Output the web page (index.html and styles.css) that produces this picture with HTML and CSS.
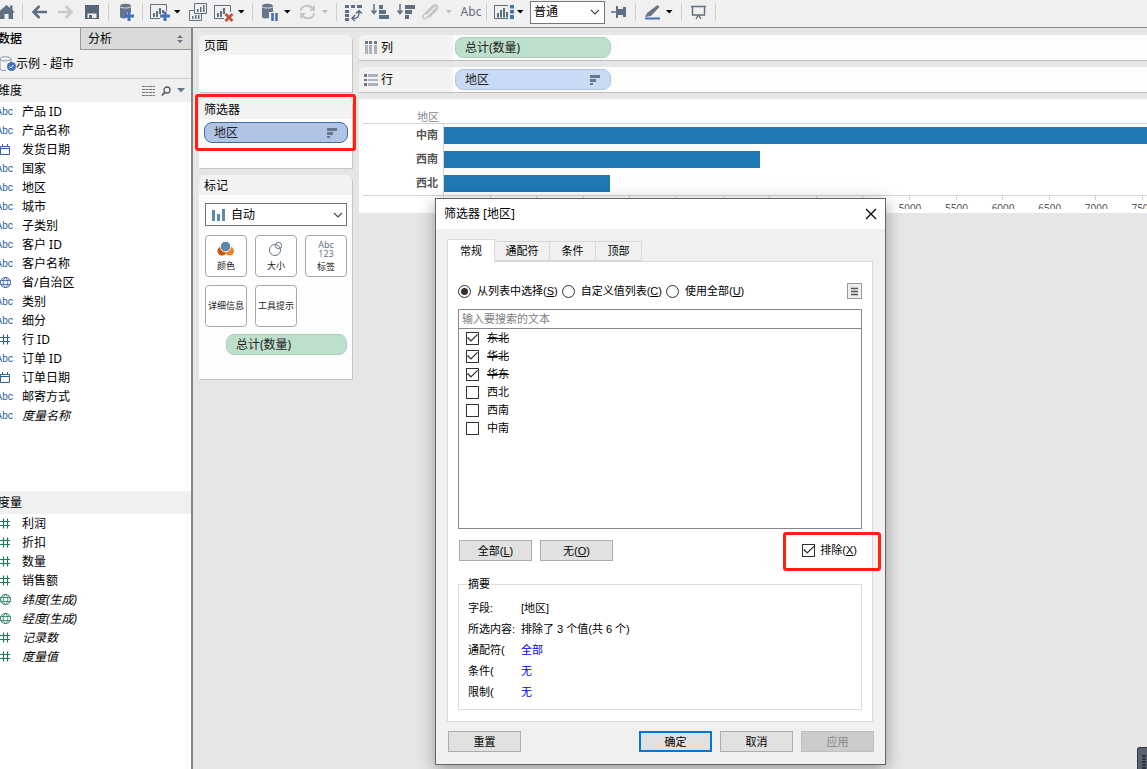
FILE: index.html
```html
<!DOCTYPE html>
<html lang="zh-CN">
<head>
<meta charset="utf-8">
<title>示例 - 超市</title>
<link rel="stylesheet" href="styles.css">
</head>
<body>
<svg class="defs" aria-hidden="true">
  <symbol id="i-date" viewBox="0 0 15 13"><path d="M2.5 3.5h9v8h-9zM2 5.5h10M4.5 1v3M9.5 1v3" fill="none" stroke="currentColor"/></symbol>
  <symbol id="i-num" viewBox="0 0 15 13"><path d="M5.5 1.500v10M9.500 1.500v10M2 4.500h10M2 8.500h10" fill="none" stroke="currentColor" stroke-width="1.200"/></symbol>
  <symbol id="i-geo" viewBox="0 0 15 13"><circle cx="7.500" cy="6.500" r="5" fill="none" stroke="currentColor"/><path d="M2.500 4.500h10M2.500 8.500h10M7.500 1.500C4.500 4 4.500 9 7.500 11.500C10.500 9 10.500 4 7.500 1.500" fill="none" stroke="currentColor" stroke-width=".8"/></symbol>
  <symbol id="i-sort" viewBox="0 0 12 12"><path d="M1 1h10v3H1zM1 5h6v3H1zM1 9h3v2H1z" fill="currentColor"/></symbol>
  <symbol id="i-chev" viewBox="0 0 10 8"><path d="M1 2l4 4 4-4" fill="none" stroke="#444" stroke-width="1.100"/></symbol>
</svg>

<header class="toolbar">
  <button aria-label="主页"><svg width="22" height="24" viewBox="0 0 22 24"><path d="M-2 12.500L6.500 5l3.500 3V5.500h2.500V10l2.500 2.500h-2V19H8.500v-5h-4v5H0v-6.500z" fill="#5f6f82"/></svg></button>
  <span class="sep"></span>
  <button aria-label="后退"><svg width="30" height="24" viewBox="23 0 30 24"><path d="M39.500 6l-6 6 6 6M34 12h13" fill="none" stroke="#5f6f82" stroke-width="2.600"/></svg></button>
  <button aria-label="前进" disabled><svg width="26" height="24" viewBox="53 0 26 24"><path d="M65.500 6l6 6-6 6M71 12H58" fill="none" stroke="#c9c9c9" stroke-width="2.600"/></svg></button>
  <button aria-label="保存"><svg width="29" height="24" viewBox="79 0 29 24"><path d="M85 5h14v14H85z" fill="#566579"/><path d="M87.500 13.500h9V18h-9z" fill="#f0f0f0"/><path d="M89 15h3v3h-3z" fill="#566579"/></svg></button>
  <span class="sep"></span>
  <button aria-label="新建数据源"><svg width="33" height="24" viewBox="109 0 33 24"><path d="M120 6c0-3 11-3 11 0v6h-4v6c-4 1-7 0-7-1z" fill="#66758a"/><path d="M120 6.500c0 2 11 2 11 0" stroke="#dfe3e8" fill="none"/><path d="M129 11v10M124 16h10" stroke="#4472b8" stroke-width="3"/></svg></button>
  <span class="sep"></span>
  <button aria-label="新建工作表"><svg width="40" height="24" viewBox="143 0 40 24"><path d="M160 18.500h-9.500v-14h16V11" fill="none" stroke="#5f6f82"/><path d="M153 13h2v4h-2zM156 11h2v6h-2zM159 8h2v6h-2zM162 10h2v3h-2z" fill="#5f6f82"/><path d="M165 11.500v9.500M160 16h10" stroke="#4472b8" stroke-width="3"/><path d="M174 10h6.500l-3.200 3.500z"/></svg></button>
  <button aria-label="复制工作表"><svg width="27" height="24" viewBox="183 0 27 24"><path d="M194.500 10V3.500h12v10h-12v-3h-5v10h12v-7" fill="none" stroke="#5f6f82"/><path d="M192 16h1.500v3H192zM195 15h1.500v4H195zM198 15h1.500v4H198zM197 9h1.500v3H197zM200 7h1.500v5H200zM203 5h1.500v7H203z" fill="#5f6f82"/></svg></button>
  <button aria-label="清除工作表"><svg width="42" height="24" viewBox="210 0 42 24"><path d="M224 18.500h-9.500v-13h16V12" fill="none" stroke="#5f6f82"/><path d="M217 13h2v4h-2zM220 11h2v6h-2zM223 8h2v6h-2z" fill="#5f6f82"/><path d="M225.500 14l7 7M232.500 14l-7 7" stroke="#c2513a" stroke-width="2.600"/><path d="M238 10h6.500l-3.200 3.500z"/></svg></button>
  <span class="sep"></span>
  <button aria-label="暂停更新"><svg width="41" height="24" viewBox="253 0 41 24"><path d="M262 6c0-3 11-3 11 0v6h-4v6c-4 1-7 0-7-1z" fill="#66758a"/><path d="M262 6.500c0 2 11 2 11 0" stroke="#dfe3e8" fill="none"/><path d="M272.500 13v8M276.500 13v8" stroke="#4472b8" stroke-width="2.600"/><path d="M284 10h6.500l-3.200 3.500z"/></svg></button>
  <button aria-label="刷新" disabled><svg width="42" height="24" viewBox="294 0 42 24"><path d="M301 11c0-6 9-7 12-2M314 13c0 6-9 7-12 2" fill="none" stroke="#c4c4c4" stroke-width="2"/><path d="M315 5v6h-6zM300 19v-6h6z" fill="#c4c4c4"/><path d="M322 10h6l-3 3.500z" fill="#bbb"/></svg></button>
  <span class="sep"></span>
  <button aria-label="交换行和列"><svg width="30" height="24" viewBox="337 0 30 24"><path d="M345 5h4v3h-4zM351 5h4v3h-4zM357 5h5v3h-5zM345 10h4v3h-4zM345 14h4v3h-4zM345 18h4v3h-4z" fill="#5f6f82"/><path d="M353 18.500c5 0 6-2 6-7M356 13.500l3-3 3 3M355 15l-3 3.500 3 2.500" fill="none" stroke="#5f6f82" stroke-width="1.500"/></svg></button>
  <button aria-label="升序"><svg width="26" height="24" viewBox="367 0 26 24"><path d="M374 4v9M371.500 10.500l2.500 3 2.500-3" fill="none" stroke="#5f6f82" stroke-width="1.500"/><path d="M379 5h4v4h-4zM379 10h7v4h-7zM379 15h10v4h-10z" fill="#5f6f82"/></svg></button>
  <button aria-label="降序"><svg width="26" height="24" viewBox="393 0 26 24"><path d="M400 4v9M397.500 10.500l2.500 3 2.500-3" fill="none" stroke="#5f6f82" stroke-width="1.500"/><path d="M405 5h10v4h-10zM405 10h7v4h-7zM405 15h4v4h-4z" fill="#5f6f82"/></svg></button>
  <button aria-label="分组" disabled><svg width="37" height="24" viewBox="419 0 37 24"><path d="M426 14.500l7-7c2-2 4 0 2 2l-8 8c-3 3-6 0-3-3l8-8c4-4 8 0 4 4l-7 7" fill="none" stroke="#c2c2c2" stroke-width="1.300"/><path d="M446 10h5.500l-2.700 3.500z" fill="#bbb"/></svg></button>
  <button class="abc-tool">Abc</button>
  <span class="sep"></span>
  <button aria-label="显示卡"><svg width="43" height="24" viewBox="487 0 43 24"><path d="M508 5.500h-13.500v13H508" fill="none" stroke="#5f6f82"/><path d="M497 13h2v4.500h-2zM500 10h2v7.500h-2zM503 8h2v9.500h-2zM506 12h2v5.500h-2z" fill="#5f6f82"/><path d="M510 5h4v3.500h-4zM510 10h4v3.500h-4zM510 15h4v4h-4z" fill="#4472b8"/><path d="M517 10h6.500l-3.200 3.500z"/></svg></button>
  <span class="fit"><select aria-label="适合"><option>普通</option></select><svg width="10" height="8"><use href="#i-chev"/></svg></span>
  <button aria-label="固定轴"><svg width="30" height="24" viewBox="605 0 30 24"><path d="M611 12h6" stroke="#5f6f82" stroke-width="1.500"/><path d="M616 6h2v3h5V7h3v10h-3v-2h-5v3h-2z" fill="#5f6f82"/></svg></button>
  <span class="sep"></span>
  <button aria-label="突出显示"><svg width="45" height="24" viewBox="636 0 45 24"><path d="M645 17l2-4 10.500-8 2 2-8.500 9z" fill="#66758a"/><path d="M645 18.500h15" stroke="#4472b8" stroke-width="2"/><path d="M666 10h6.500l-3.200 3.500z"/></svg></button>
  <span class="sep"></span>
  <button aria-label="演示模式"><svg width="33" height="24" viewBox="682 0 33 24"><path d="M691 6.500h15M692.500 7v8h12V7M696 19l2.500-4M701 19l-2.500-4" fill="none" stroke="#5f6f82" stroke-width="1.400"/></svg></button>
  <span class="sep"></span>
</header>

<main class="workspace">
  <aside class="data-pane">
    <div class="pane-tabs">
      <button class="pane-tab active">数据</button>
      <button class="pane-tab">分析<svg width="8" height="10" viewBox="0 0 8 10"><path d="M1 4l3-3 3 3zM1 6l3 3 3-3z" fill="#66758a"/></svg></button>
    </div>
    <div class="source"><svg width="18" height="18" viewBox="0 0 18 18"><path d="M1 4c0-3 11-3 11 0v6M1 4v10c1 1.500 4 1.500 6 1.500M1 4c0 2.500 11 2.500 11 0" fill="#f5f5f5" stroke="#8a95a3"/><circle cx="12.500" cy="11.500" r="4.500" fill="#4472b8"/><path d="M10.500 11.500l1.500 1.500 2.500-3" stroke="#fff" fill="none"/></svg>示例 - 超市</div>
    <h2 class="pane-head dim-head">维度
      <span class="head-tools"><svg width="13" height="10" viewBox="0 0 13 10"><path d="M0 .5h13M0 3.500h13M0 6.500h13M0 9.500h13" stroke="#777" stroke-dasharray="3 .500"/></svg><svg width="10" height="10" viewBox="0 0 10 10"><circle cx="6" cy="4" r="3" fill="none" stroke="#556" stroke-width="1.300"/><path d="M4 6L1 9.500" stroke="#556" stroke-width="1.800"/></svg><svg width="8" height="5" viewBox="0 0 8 5"><path d="M0 0h8L4 4.500z" fill="#66758a"/></svg></span>
    </h2>
    <ul class="fields dims">
      <li><i>Abc</i>产品 ID</li>
      <li><i>Abc</i>产品名称</li>
      <li><svg><use href="#i-date"/></svg>发货日期</li>
      <li><i>Abc</i>国家</li>
      <li><i>Abc</i>地区</li>
      <li><i>Abc</i>城市</li>
      <li><i>Abc</i>子类别</li>
      <li><i>Abc</i>客户 ID</li>
      <li><i>Abc</i>客户名称</li>
      <li><svg><use href="#i-geo"/></svg>省/自治区</li>
      <li><i>Abc</i>类别</li>
      <li><i>Abc</i>细分</li>
      <li><svg><use href="#i-num"/></svg>行 ID</li>
      <li><i>Abc</i>订单 ID</li>
      <li><svg><use href="#i-date"/></svg>订单日期</li>
      <li><i>Abc</i>邮寄方式</li>
      <li><i>Abc</i><em>度量名称</em></li>
    </ul>
    <h2 class="pane-head">度量</h2>
    <ul class="fields measures">
      <li><svg><use href="#i-num"/></svg>利润</li>
      <li><svg><use href="#i-num"/></svg>折扣</li>
      <li><svg><use href="#i-num"/></svg>数量</li>
      <li><svg><use href="#i-num"/></svg>销售额</li>
      <li><svg><use href="#i-geo"/></svg><em>纬度(生成)</em></li>
      <li><svg><use href="#i-geo"/></svg><em>经度(生成)</em></li>
      <li><svg><use href="#i-num"/></svg><em>记录数</em></li>
      <li><svg><use href="#i-num"/></svg><em>度量值</em></li>
    </ul>
  </aside>

  <section class="cards">
    <div class="card pages"><h3>页面</h3></div>
    <div class="card filters"><h3>筛选器</h3>
      <div class="pill selected">地区<svg width="12" height="12"><use href="#i-sort"/></svg></div>
      <span class="callout"></span>
    </div>
    <div class="card marks"><h3>标记</h3>
      <div class="mark-type"><svg width="14" height="12" viewBox="0 0 14 12"><path d="M0 1h3v11H0zM5 5h3v7H5zM10 0h3v12h-3z" fill="#5b89ad"/></svg><select aria-label="标记类型"><option>自动</option></select><svg class="chev" width="10" height="8"><use href="#i-chev"/></svg></div>
      <div class="mark-grid">
        <button><svg width="18" height="16" viewBox="0 0 18 16"><circle cx="5" cy="10" r="4.500" fill="#c8560f"/><circle cx="12.500" cy="10" r="4.500" fill="#f08030"/><circle cx="8.500" cy="5.500" r="5.300" fill="#5b89ad" stroke="#fff"/></svg>颜色</button>
        <button><svg width="18" height="16" viewBox="0 0 18 16"><circle cx="8" cy="9" r="5.500" fill="none" stroke="#66758a"/><circle cx="11.500" cy="4.500" r="3.200" fill="none" stroke="#66758a"/></svg>大小</button>
        <button><span class="abc123">Abc<br>123</span>标签</button>
        <button>详细信息</button>
        <button>工具提示</button>
      </div>
      <div class="pill green">总计(数量)</div>
    </div>
  </section>

  <section class="sheet">
    <div class="shelf"><div class="shelf-name"><svg width="14" height="14" viewBox="0 0 14 14"><path d="M1 0h3v3H1zM5 0h3v3H5zM10 0h3v3h-3z" fill="#66758a"/><path d="M1 4h3v9H1zM5 4h3v9H5zM10 4h3v9h-3z" fill="#aab2bb"/></svg>列</div><div class="pill green">总计(数量)</div></div>
    <div class="shelf"><div class="shelf-name"><svg width="14" height="14" viewBox="0 0 14 14"><path d="M0 1h3v3H0zM0 6h3v2H0zM0 10h3v3H0z" fill="#66758a"/><path d="M4 1h10v3H4zM4 6h10v2H4zM4 10h10v3H4z" fill="#aab2bb"/></svg>行</div><div class="pill blue">地区<svg width="12" height="12"><use href="#i-sort"/></svg></div></div>
    <div class="view">
      <div class="chart-head">地区</div>
      <div class="bar-row"><span>中南</span><div class="track"><div class="bar" style="width:100%"></div></div></div>
      <div class="bar-row"><span>西南</span><div class="track"><div class="bar" style="width:45%"></div></div></div>
      <div class="bar-row"><span>西北</span><div class="track"><div class="bar" style="width:23.6%"></div></div></div>
      <div class="axis">
        <i></i><i></i><i></i><i></i><i></i><i></i><i></i><i></i><i></i><i></i>
        <i><b>5000</b></i><i><b>5500</b></i><i><b>6000</b></i><i><b>6500</b></i><i><b>7000</b></i><i><b>7500</b></i>
      </div>
    </div>
  </section>
</main>

<section class="dialog" role="dialog" aria-labelledby="dlg-title">
  <div class="dlg-title"><span id="dlg-title">筛选器 [地区]</span><button aria-label="关闭"><svg width="12" height="12" viewBox="0 0 12 12"><path d="M1 1l10 10M11 1L1 11" stroke="#000" stroke-width="1.200"/></svg></button></div>
  <div class="dlg-body">
    <div class="tabs" role="tablist">
      <button role="tab" class="on">常规</button><button role="tab" class="wide">通配符</button><button role="tab">条件</button><button role="tab">顶部</button>
    </div>
    <div class="panel">
      <div class="modes">
        <label><input type="radio" name="mode" checked>从列表中选择(<u>S</u>)</label>
        <label><input type="radio" name="mode">自定义值列表(<u>C</u>)</label>
        <label><input type="radio" name="mode">使用全部(<u>U</u>)</label>
        <button class="menu" aria-label="选项"><svg width="9" height="9" viewBox="0 0 9 9"><path d="M1 1.500h7M1 4.500h7M1 7.500h7" stroke="#555" stroke-width="1.600"/></svg></button>
      </div>
      <div class="listbox">
        <input class="search" type="text" placeholder="输入要搜索的文本" aria-label="搜索">
        <label><input type="checkbox" checked><s>东北</s></label>
        <label><input type="checkbox" checked><s>华北</s></label>
        <label><input type="checkbox" checked><s>华东</s></label>
        <label><input type="checkbox">西北</label>
        <label><input type="checkbox">西南</label>
        <label><input type="checkbox">中南</label>
      </div>
      <div class="actions">
        <button class="btn">全部(<u>L</u>)</button>
        <button class="btn">无(<u>O</u>)</button>
        <div class="exclude"><label><input type="checkbox" checked><span>排除(<u>X</u>)</span></label><span class="callout"></span></div>
      </div>
      <fieldset>
        <legend>摘要</legend>
        <dl>
          <dt>字段:</dt><dd>[地区]</dd>
          <dt>所选内容:</dt><dd>排除了 3 个值(共 6 个)</dd>
          <dt>通配符(</dt><dd><a href="#">全部</a></dd>
          <dt>条件(</dt><dd><a href="#">无</a></dd>
          <dt>限制(</dt><dd><a href="#">无</a></dd>
        </dl>
      </fieldset>
    </div>
    <div class="footer">
      <button class="btn reset">重置</button>
      <button class="btn primary">确定</button>
      <button class="btn">取消</button>
      <button class="btn" disabled>应用</button>
    </div>
  </div>
</section>
<div class="dock" aria-hidden="true"></div>
</body>
</html>
```
FILE: styles.css
```css
* { box-sizing: border-box; }
body {
  margin: 0; height: 100vh; overflow: hidden;
  display: flex; flex-direction: column;
  background: #e6e6e6; color: #000;
  font: 12px/18px "Noto Sans", "Noto Sans CJK SC", sans-serif;
}
button, select, input { font: inherit; color: inherit; margin: 0; padding: 0; }
button { background: none; border: 0; }
svg { display: block; flex: none; }
.defs { position: absolute; width: 0; height: 0; }
h2, h3, ul, dl, dd { margin: 0; padding: 0; font-weight: 400; font-size: inherit; }
ul { list-style: none; }

.toolbar { display: flex; align-items: center; height: 28px; padding-bottom: 3px; background: #f0f0f0; border-bottom: 1px solid #8c8c8c; flex: none; }
.sep { width: 1px; height: 18px; background: #cfcfcf; }
.abc-tool { width: 30px; color: #5f6f82; font: 12px/20px "Noto Sans", sans-serif; }
.fit { display: flex; align-items: center; width: 75px; height: 23px; border: 1px solid #777; background: #fff; padding: 0 4px 0 3px; }
select { appearance: none; border: 0; background: none; flex: 1; min-width: 0; }

.workspace { flex: 1; display: flex; min-height: 0; }
.data-pane { width: 195px; margin-left: -2px; flex: none; background: #fff; border-right: 2px solid #858585; display: flex; flex-direction: column; }
.pane-tabs { display: flex; background: #f0f0f0; height: 22px; }
.pane-tab { text-align: left; }
.pane-tab.active { width: 82px; font-weight: 500; }
.pane-tab:not(.active) { flex: 1; display: flex; justify-content: space-between; align-items: center; padding: 0 7px; background: #dadada; border: solid #999; border-width: 0 0 1px 1px; }
.source { display: flex; align-items: center; height: 29px; background: #f0f0f0; border-bottom: 1px solid #ccc; }
.source svg { margin-left: 1px; margin-right: -1px; }
.pane-head { display: flex; align-items: center; justify-content: space-between; height: 23px; background: #f0f0f0; }
.head-tools { display: flex; align-items: center; gap: 6px; padding-right: 6px; }
.fields li { display: flex; align-items: center; height: 19px; gap: 9px; line-height: 19px; }
.fields svg { width: 15px; height: 13px; }
.fields i { width: 15px; display: flex; justify-content: flex-end; font: 10px/19px Roboto, sans-serif; }
.dims { height: 389px; }
.dims i, .dims svg { color: #2f5f9e; }
.measures svg { color: #1f7a58; }

.cards { width: 166px; flex: none; padding: 7px 7px 7px 6px; display: flex; flex-direction: column; gap: 7px; }
.card { position: relative; background: #fdfdfd; border-radius: 6px 6px 0 0; box-shadow: 1px 1px 0 #c4c4c4; }
.card h3 { height: 20px; line-height: 21px; padding-left: 5px; background: #f2f2f0; border-radius: 6px 6px 0 0; }
.pages { height: 57px; }
.filters { height: 69px; }
.marks { height: 204px; }
.pill { display: flex; align-items: center; justify-content: space-between; height: 21px; padding: 0 9px; border: 1px solid; border-radius: 8px; color: #222; }
.pill svg { color: #66758a; }
.pill.selected { margin: 3px 4px 0 5px; background: #b0c5e6; border-color: #3f6f98; }
.pill.green { background: #bddfcb; border-color: #a9d1ba; }
.pill.blue { background: #c9daf5; border-color: #afc6e8; }
.callout { position: absolute; border: 3px solid #ff2010; border-radius: 3px; pointer-events: none; }
.filters .callout { inset: -5px -4px 17px; }
.mark-type { display: flex; align-items: center; gap: 5px; height: 23px; margin: 8px 5px 9px 6px; padding: 0 3px 0 6px; border: 1px solid #777; background: #fff; }
.mark-grid { display: grid; grid-template-columns: repeat(3, 42px); gap: 8px; margin-left: 6px; }
.mark-grid button { height: 42px; border: 1px solid #a8a8a8; border-radius: 4px; background: #fff; display: flex; flex-direction: column; align-items: center; justify-content: center; gap: 3px; font-size: 9px; line-height: 12px; white-space: nowrap; color: #222; }
.abc123 { font: 9px/9px "Noto Sans", sans-serif; color: #66758a; }
.marks .pill { margin: 7px 5px 0 27px; }

.sheet { flex: 1; min-width: 0; padding-top: 7px; display: flex; flex-direction: column; }
.shelf { display: flex; align-items: center; height: 26px; margin-bottom: 6px; background: #fdfdfd; border-bottom: 1px solid #bfbfbf; border-radius: 6px 0 0; }
.shelf-name { align-self: stretch; display: flex; align-items: center; gap: 3px; width: 94px; padding-left: 5px; background: #f2f2f0; border-radius: 6px 0 0; }
.shelf .pill { width: 156px; margin-left: 2px; }
.view { background: #fff; height: 114px; padding-left: 4px; overflow: hidden; }
.chart-head { height: 25px; padding: 8px 0 0 54px; border-bottom: 1px solid #d4d4d4; font-size: 11px; line-height: 20px; color: #888; }
.bar-row { display: flex; height: 24px; }
.bar-row span { width: 80px; padding-right: 5px; text-align: right; font-weight: 700; font-size: 11px; line-height: 22px; color: #555; }
.track { flex: 1; border-left: 1px solid #d4d4d4; padding-top: 3px; }
.bar { height: 17px; background: #1f77b4; }
.axis { display: grid; grid-template-columns: repeat(15, 500fr) 55fr; padding-left: 80px; height: 14px; margin-top: -1px; border-top: 1px solid #d4d4d4; overflow: hidden; }
.axis i { font-style: normal; height: 4px; border-left: 1px solid #d4d4d4; min-width: 0; }
.axis b { display: block; width: 40px; margin: 5px 0 0 -20px; text-align: center; font-weight: 400; font-size: 10px; line-height: 15px; color: #555; }

.dialog { position: absolute; left: 435px; top: 198px; width: 451px; background: #f0f0f0; border: 1px solid #666; box-shadow: 0 4px 16px rgba(0, 0, 0, .35); font: 11px/16px "Liberation Sans", "Noto Sans CJK SC", sans-serif; }
.dlg-title { display: flex; justify-content: space-between; align-items: center; height: 30px; padding: 0 8px; background: #fff; font: 12px/18px "Noto Sans", "Noto Sans CJK SC", sans-serif; }
.dlg-body { padding: 10px 12px 12px 11px; }
.tabs { display: flex; align-items: flex-end; height: 22px; }
.tabs button { width: 46px; height: 20px; background: #f0f0f0; border: 1px solid #d9d9d9; border-left: 0; }
.tabs .wide { width: 55px; }
.tabs .on { width: 48px; height: 23px; background: #fff; border: 1px solid #d9d9d9; border-bottom: 0; position: relative; z-index: 1; margin-bottom: -1px; }
.panel { background: #fff; border: 1px solid #d9d9d9; padding: 20px 10px 11px; }
.modes { display: flex; align-items: center; height: 18px; gap: 4px; }
label { display: flex; align-items: center; white-space: pre; }
input[type="radio"], input[type="checkbox"] { appearance: none; width: 13px; height: 13px; border: 1px solid #333; background: #fff; flex: none; display: grid; place-items: center; }
input[type="radio"] { border-radius: 50%; margin-right: 6px; }
input[type="radio"]:checked::before { content: ""; width: 7px; height: 7px; border-radius: 50%; background: #333; }
input[type="checkbox"]:checked::before { content: ""; width: 11px; height: 11px; background: #333; clip-path: polygon(0 50%, 10% 42%, 36% 69%, 92% 13%, 100% 21%, 36% 85%); }
.menu { margin-left: auto; width: 15px; height: 16px; border: 1px solid #999; background: #eee; display: grid; place-items: center; }
.listbox { height: 220px; margin-top: 9px; border: 1px solid #828790; }
.search { display: block; width: 100%; height: 19px; border: 0; border-bottom: 1px solid #828790; padding: 0 3px; outline: 0; }
.search::placeholder { color: #808080; }
.listbox label { height: 18px; gap: 8px; padding-left: 7px; }
.actions { display: flex; gap: 8px; margin-top: 11px; padding-left: 1px; }
.btn { width: 73px; height: 21px; background: #e1e1e1; border: 1px solid #adadad; }
.primary { border: 2px solid #0078d7; }
.btn:disabled { background: #ccc; border-color: #bfbfbf; color: #888; }
.exclude { position: relative; margin-left: auto; padding: 2px 5px 0 0; }
.exclude label { gap: 5px; }
.exclude .callout { inset: -8px -19px -10px; }
fieldset { margin: 15px 0 0; border: 1px solid #dcdcdc; padding: 5px 9px 7px; min-width: 0; }
legend { padding: 0 1px; margin-left: -1px; line-height: 16px; }
dl { display: grid; grid-template-columns: 53px 1fr; grid-auto-rows: 21px; align-items: center; }
a { color: #00f; text-decoration: none; }
.footer { display: flex; gap: 8px; padding: 9px 0 0 1px; margin-right: -1px; }
.reset { margin-right: auto; }

.dock { position: absolute; right: 0; bottom: 0; width: 10px; height: 22px; border: solid #333844; border-width: 1px 0 0 1px; border-radius: 3px 0 0; background: repeating-linear-gradient(#2f3440 0 2px, #5a6273 2px 3px) 4px 7px / 4px 15px no-repeat #5a6273; }
```
